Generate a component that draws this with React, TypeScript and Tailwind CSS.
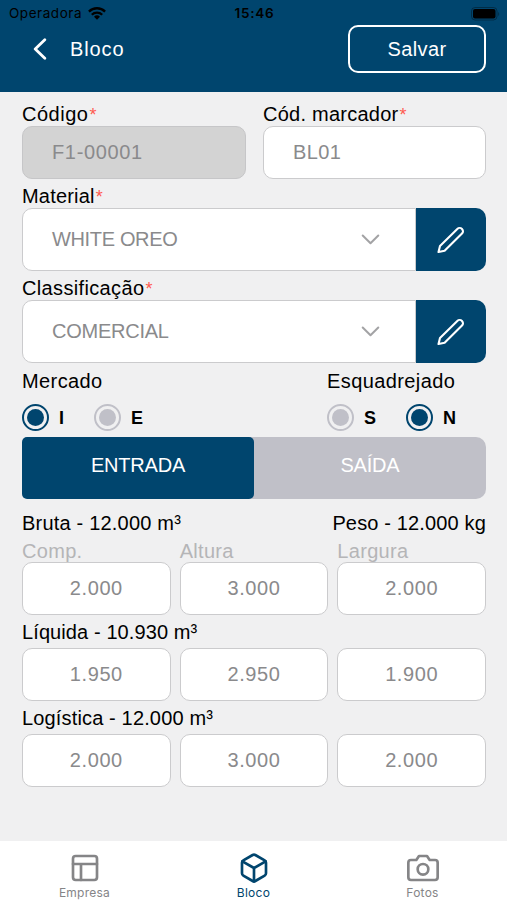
import { useState } from 'react';
import type { ReactNode } from 'react';
import clsx from 'clsx';

function WifiIcon() {
  return (
    <svg className="w-[18px] h-[13px]" viewBox="0 0 18 13" fill="none" stroke="black" strokeWidth="2.3">
      <path d="M0.9 4.6a11.5 11.5 0 0 1 16.2 0" />
      <path d="M3.8 7.7a7.4 7.4 0 0 1 10.4 0" />
      <path d="M9 12.8 6 9.8a4.3 4.3 0 0 1 6 0z" fill="black" stroke="none" />
    </svg>
  );
}

function BatteryIcon() {
  return (
    <svg className="w-[29px] h-[14px]" viewBox="0 0 29 14">
      <rect x="0.5" y="0.5" width="25.5" height="12.5" rx="3.6" fill="none" stroke="black" strokeOpacity="0.35" />
      <rect x="2" y="2" width="22.5" height="9.5" rx="2" fill="black" />
      <path d="M27.3 5v4c1.2-.6 1.2-3.4 0-4z" fill="black" fillOpacity="0.4" />
    </svg>
  );
}

function PencilIcon() {
  return (
    <svg className="w-8 h-8" viewBox="0 0 32 32" fill="none" stroke="white" strokeWidth="2.1" strokeLinecap="round" strokeLinejoin="round">
      <path d="M3.5 28 5 22 22.300 4.900a3.300 3.300 0 0 1 4.700 4.700L9.600 26.800z" />
    </svg>
  );
}

function ChevronDown() {
  return (
    <svg className="w-[19px] h-[11px]" viewBox="0 0 19 11" fill="none" stroke="#a3a3a5" strokeWidth="2" strokeLinecap="round" strokeLinejoin="round">
      <path d="M1.7 1.5 9.5 9.3 17.3 1.5" />
    </svg>
  );
}

function Label({ children, required, className }: { children: ReactNode; required?: boolean; className?: string }) {
  return (
    <p className={clsx('h-6 leading-6 text-xl text-black whitespace-nowrap', className)}>
      {children}
      {required && <span className="ml-px text-lg leading-none text-[#ff5a50] tracking-normal">*</span>}
    </p>
  );
}

function SelectField({ value, className }: { value: string; className: string }) {
  return (
    <div className="flex h-[63px]">
      <button className="flex flex-1 items-center justify-between rounded-l-[10px] border border-[#cbcbcd] bg-white pl-[29px] pr-[35px]">
        <span className={clsx('pb-0.5 text-xl text-[#8a8a8c]', className)}>{value}</span>
        <ChevronDown />
      </button>
      <button className="flex w-[70px] items-center justify-center rounded-r-[10px] bg-[#00456e]">
        <PencilIcon />
      </button>
    </div>
  );
}

function Radio({ label, checked, onClick }: { label: string; checked: boolean; onClick: () => void }) {
  return (
    <button onClick={onClick} className="flex h-[27px] items-center gap-2.5">
      <span
        className={clsx(
          'flex size-[27px] items-center justify-center rounded-full border-2',
          checked ? 'border-[#00456e]' : 'border-[#c0c0c8]'
        )}
      >
        <span className={clsx('size-[17px] rounded-full', checked ? 'bg-[#00456e]' : 'bg-[#c0c0c8]')} />
      </span>
      <span className="text-lg leading-6 font-bold text-black">{label}</span>
    </button>
  );
}

function Measures({ values }: { values: string[] }) {
  return (
    <div className="grid grid-cols-3 gap-[9px]">
      {values.map((value, i) => (
        <div key={i} className="flex h-[53px] items-center justify-center rounded-[10px] border border-[#cbcbcd] bg-white pb-px text-xl tracking-[0.6px] text-[#8a8a8c]">
          {value}
        </div>
      ))}
    </div>
  );
}

const tabs = [
  {
    label: 'Empresa',
    icon: (
      <>
        <rect x="3" y="3" width="18" height="18" rx="2" />
        <path d="M3 9h18M9 21V9" />
      </>
    ),
  },
  {
    label: 'Bloco',
    icon: (
      <>
        <path d="M21 16V8a2 2 0 0 0-1-1.73l-7-4a2 2 0 0 0-2 0l-7 4A2 2 0 0 0 3 8v8a2 2 0 0 0 1 1.73l7 4a2 2 0 0 0 2 0l7-4A2 2 0 0 0 21 16z" />
        <path d="M3.27 6.96 12 12.01l8.73-5.05M12 22.08V12" />
      </>
    ),
  },
  {
    label: 'Fotos',
    icon: (
      <>
        <path d="M23 19a2 2 0 0 1-2 2H3a2 2 0 0 1-2-2V8a2 2 0 0 1 2-2h4l2-3h6l2 3h4a2 2 0 0 1 2 2z" />
        <circle cx="12" cy="13" r="4" />
      </>
    ),
  },
];

export default function App() {
  const [market, setMarket] = useState('I');
  const [squared, setSquared] = useState('N');
  const [mode, setMode] = useState('ENTRADA');
  const [tab, setTab] = useState('Bloco');

  return (
    <div className="flex h-[900px] w-[507px] flex-col overflow-hidden bg-[#f0f0f1] font-['Liberation_Sans',Arial,sans-serif]">
      <header className="h-[92px] bg-[#00456e]">
        <div className="grid h-[25px] grid-cols-3 items-center pl-[9px] pr-[7px] pt-[2px] font-[Inter,sans-serif] text-[13.5px] text-black">
          <div className="flex items-center gap-1.5">
            <span className="tracking-[0.55px]">Operadora</span>
            <WifiIcon />
          </div>
          <span className="text-center font-semibold tracking-[0.8px]">15:46</span>
          <div className="flex justify-end">
            <BatteryIcon />
          </div>
        </div>
        <div className="flex h-12 items-center justify-between pl-[33px] pr-[21px]">
          <div className="flex items-center gap-[23px]">
            <svg className="w-[14px] h-[22px]" viewBox="0 0 14 22" fill="none" stroke="white" strokeWidth="2.8" strokeLinecap="round" strokeLinejoin="round">
              <path d="M11.8 1.8 2.2 11l9.6 9.2" />
            </svg>
            <h1 className="text-xl tracking-[0.9px] text-white">Bloco</h1>
          </div>
          <button className="h-12 w-[138px] rounded-[10px] border-2 border-white text-xl tracking-[0.4px] text-white">Salvar</button>
        </div>
      </header>

      <main className="flex-1 pl-[22px] pr-[21px] pt-2.5">
        <div className="flex gap-[17px]">
          <div className="w-[224px]">
            <Label required className="tracking-[0.5px]">Código</Label>
            <div className="flex h-[53px] items-center rounded-[10px] border border-[#c6c6c8] bg-[#d3d3d3] pl-[29px] pb-px text-xl tracking-[0.65px] text-[#8a8a8c]">
              F1-00001
            </div>
          </div>
          <div className="flex-1">
            <Label required className="tracking-[0.25px]">Cód. marcador</Label>
            <div className="flex h-[53px] items-center rounded-[10px] border border-[#cbcbcd] bg-white pl-[29px] pb-px text-xl tracking-[0.4px] text-[#8a8a8c]">
              BL01
            </div>
          </div>
        </div>

        <Label required className="mt-[5px] tracking-[0.2px]">Material</Label>
        <SelectField value="WHITE OREO" className="tracking-[-0.35px]" />

        <Label required className="mt-[5px] tracking-[0.35px]">Classificação</Label>
        <SelectField value="COMERCIAL" className="tracking-[-0.25px]" />

        <div className="mt-1.5 flex justify-between">
          <div>
            <Label className="tracking-[0.4px]">Mercado</Label>
            <div className="mt-[11px] flex gap-[30px]">
              <Radio label="I" checked={market === 'I'} onClick={() => setMarket('I')} />
              <Radio label="E" checked={market === 'E'} onClick={() => setMarket('E')} />
            </div>
          </div>
          <div className="w-[159px]">
            <Label className="tracking-[0.4px]">Esquadrejado</Label>
            <div className="mt-[11px] flex gap-[30px]">
              <Radio label="S" checked={squared === 'S'} onClick={() => setSquared('S')} />
              <Radio label="N" checked={squared === 'N'} onClick={() => setSquared('N')} />
            </div>
          </div>
        </div>

        <div className="mt-1.5 flex h-[62px] rounded-[10px] bg-[#c0c0c8]">
          {['ENTRADA', 'SAÍDA'].map((item) => (
            <button
              key={item}
              onClick={() => setMode(item)}
              className={clsx('flex-1 pb-1.5 text-xl tracking-[-0.2px] text-white', mode === item && 'rounded-[5px] bg-[#00456e]')}
            >
              {item}
            </button>
          ))}
        </div>

        <div className="mt-3 flex justify-between">
          <Label className="tracking-[0.2px]">Bruta - 12.000 m³</Label>
          <Label className="tracking-[0.15px]">Peso - 12.000 kg</Label>
        </div>
        <div className="mt-1 grid h-[23px] grid-cols-3 gap-[9px] text-xl leading-6 tracking-[0.3px] text-[#b5b5b7]">
          <span>Comp.</span>
          <span>Altura</span>
          <span>Largura</span>
        </div>
        <Measures values={['2.000', '3.000', '2.000']} />

        <Label className="mt-[5px] mb-1 tracking-[0.1px]">Líquida - 10.930 m³</Label>
        <Measures values={['1.950', '2.950', '1.900']} />

        <Label className="mt-[5px] mb-1 tracking-[0.15px]">Logística - 12.000 m³</Label>
        <Measures values={['2.000', '3.000', '2.000']} />
      </main>

      <nav className="grid h-[59px] grid-cols-3 bg-white">
        {tabs.map((item) => (
          <button
            key={item.label}
            onClick={() => setTab(item.label)}
            className={clsx('flex flex-col items-center pt-[11px]', tab === item.label ? 'text-[#00456e]' : 'text-[#858587]')}
          >
            <svg className="size-8" viewBox="0 0 24 24" fill="none" stroke="currentColor" strokeWidth="2" strokeLinecap="round" strokeLinejoin="round">
              {item.icon}
            </svg>
            <span className="mt-px font-[Inter,sans-serif] text-xs leading-[16px] tracking-[0.25px]">{item.label}</span>
          </button>
        ))}
      </nav>
    </div>
  );
}
